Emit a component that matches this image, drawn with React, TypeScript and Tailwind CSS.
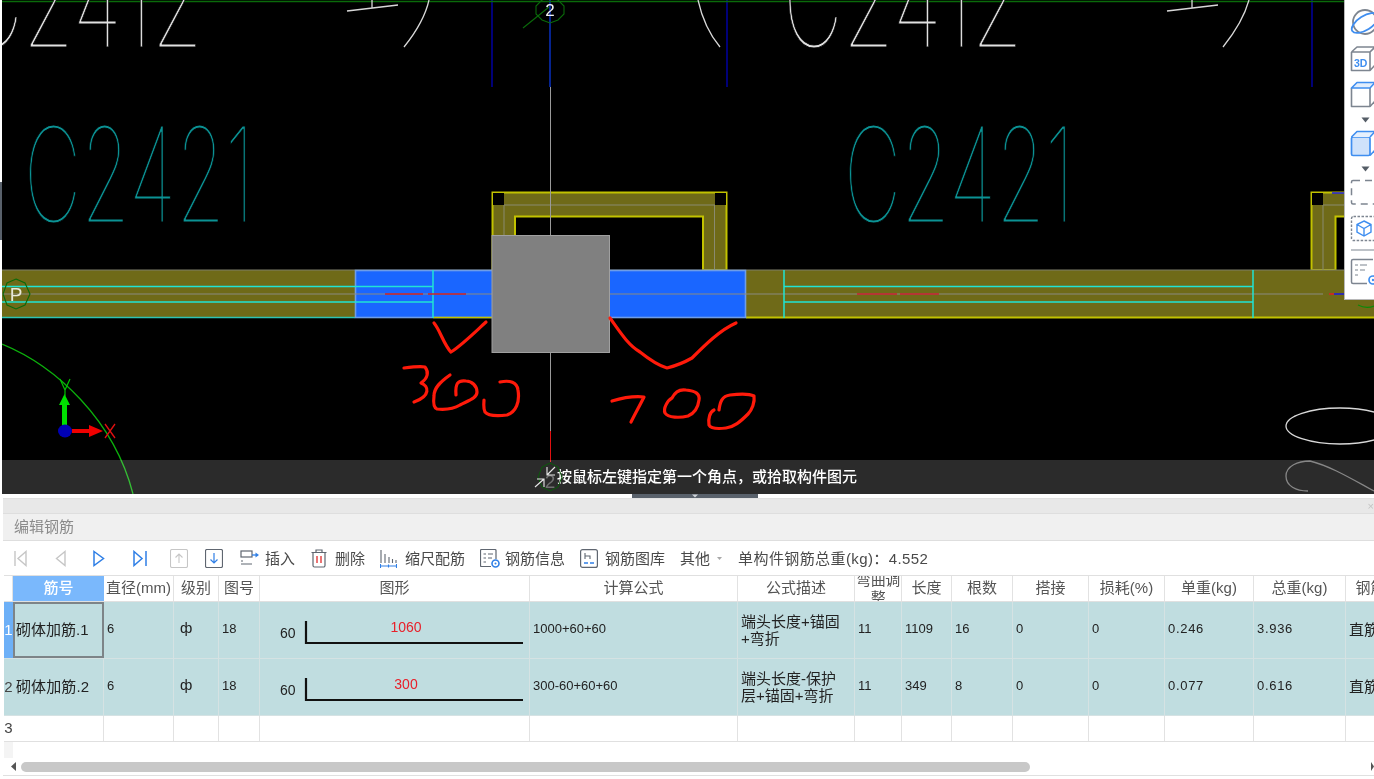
import React from "react";

const gridCols = "grid grid-cols-[9px_91px_70px_45px_41px_270px_208px_117px_47px_50px_61px_76px_76px_89px_92px_80px]";

function CadText({ x, y, w, fill, children }: { x: number; y: number; w: number; fill: string; children: string }) {
  return (
    <text x={x} y={y} textLength={w} lengthAdjust="spacingAndGlyphs" fontFamily="Inter, Roboto, sans-serif" fontWeight={100} fontSize={132} fill={fill} stroke="#000" strokeWidth={0.9}>
      {children}
    </text>
  );
}

function CadCanvas() {
  const red = "#ff1a0a";
  return (
    <svg viewBox="0 0 1372 494" className="absolute inset-0 w-[1372px] h-[494px]">
      <rect width="1372" height="494" fill="#000" />
      <g transform="translate(-2 0)">
        {/* blue grid stubs */}
        {[492, 727, 1312].map((x) => (
          <line key={x} x1={x} y1="0" x2={x} y2="87" stroke="#0000c8" strokeWidth="1.2" />
        ))}
        <line x1="550" y1="0" x2="550" y2="87" stroke="#0a3cf0" strokeWidth="1.2" />
        <line x1="2" y1="1.5" x2="1374" y2="1.5" stroke="#0a6a0a" strokeWidth="1.5" />

        {/* white annotation */}
        <CadText x={-37} y={47} w={240} fill="#e0e0e0">C2412</CadText>
        <CadText x={783} y={47} w={240} fill="#e0e0e0">C2412</CadText>
        <g stroke="#d8d8d8" strokeWidth="1.3" fill="none">
          <path d="M347 11 L398 5 M372 8 V0" />
          <path d="M404 47 C416 32 425 18 429 0" />
          <path d="M1167 11 L1218 5 M1192 8 V0" />
          <path d="M1223 47 C1235 32 1244 18 1249 0" />
          <path d="M720 47 C710 35 702 18 698 0" />
          <ellipse cx="1340" cy="426" rx="54" ry="18" />
        </g>
        <path d="M1308 491 C1296 491 1286 486 1286 476 C1286 466 1298 461 1310 461 C1330 466 1350 478 1374 491" stroke="#6e6e6e" strokeWidth="1.3" fill="none" />

        {/* cyan labels */}
        <CadText x={24} y={222} w={230} fill="#0b9294">C2421</CadText>
        <CadText x={844} y={222} w={230} fill="#0b9294">C2421</CadText>

        {/* U shapes */}
        <path d="M492.5 270 V192.5 H726.5 V270 H703 V216.5 H515 V270 Z" fill="#6f6a18" stroke="#c2c200" strokeWidth="2" />
        <rect x="493" y="193" width="11" height="12" fill="#000" />
        <rect x="715" y="193" width="11" height="12" fill="#000" />
        <path d="M504 205 H715 M504 205 V270 M714.5 205 V294" stroke="#8a8a70" strokeWidth="1" fill="none" />
        <path d="M1311.5 270 V192.5 H1346 V216.5 H1335.5 V270 Z" fill="#6f6a18" stroke="#c2c200" strokeWidth="2" />
        <rect x="1312" y="193" width="11" height="12" fill="#000" />
        <path d="M1323 205 H1346 M1323 205 V294" stroke="#8a8a70" strokeWidth="1" fill="none" />
        <line x1="1332" y1="193" x2="1346" y2="193" stroke="#1a1ae0" strokeWidth="1.5" />

        {/* wall band */}
        <rect x="2" y="270" width="1372" height="48" fill="#6f6a18" />
        <line x1="2" y1="270" x2="1374" y2="270" stroke="#7e7e6a" strokeWidth="1" />
        <line x1="2" y1="317.5" x2="355" y2="317.5" stroke="#2fc4b4" strokeWidth="1.4" />
        <line x1="746" y1="317.5" x2="1374" y2="317.5" stroke="#c2c200" strokeWidth="1.8" />

        {/* blue selected */}
        <rect x="355.5" y="270.5" width="390" height="47" fill="#1a66ff" stroke="#6e9de8" strokeWidth="1.6" />
        <line x1="433" y1="317.5" x2="492" y2="317.5" stroke="#c2c200" strokeWidth="1.4" />

        {/* centre and cyan lines */}
        <line x1="2" y1="294" x2="1323" y2="294" stroke="#8a8a80" strokeWidth="1" />
        <g stroke="#20e4d4" strokeWidth="1.5" fill="none">
          <path d="M2 286.5 H433 M2 302 H433 M433 270 V318" />
          <path d="M784 286.5 H1253 M784 302 H1253 M784 270 V318 M1253 270 V318" />
        </g>
        <g stroke="#c8202c" strokeWidth="1.4">
          <path d="M385 294 H423 M428 294 H466" />
          <path d="M857 294 H897 M900 294 H939" />
        </g>
        <path d="M1329 294 H1334" stroke="#e02020" strokeWidth="1.5" />
        <path d="M1334 294 H1346" stroke="#1a1ae0" strokeWidth="1.5" />

        {/* column */}
        <rect x="492" y="235.5" width="117.5" height="117" fill="#808080" stroke="#a0a0a0" strokeWidth="1" />
        <line x1="550.5" y1="87" x2="550.5" y2="235" stroke="#9a9a9a" strokeWidth="1" />
        <line x1="550.5" y1="353" x2="550.5" y2="431" stroke="#9a9a9a" strokeWidth="1" />
        <line x1="550.5" y1="431" x2="550.5" y2="462" stroke="#e01010" strokeWidth="1" />

        {/* axis circles */}
        <polygon points="550,-3 558,0 564,6 564,14 558,20 550,23 542,20 536,14 536,6 542,0" fill="none" stroke="#0a6a0a" strokeWidth="1.1" />
        <line x1="523" y1="28" x2="549" y2="7" stroke="#0a6a0a" strokeWidth="1.1" />
        <text x="550" y="16" textAnchor="middle" fontFamily="Liberation Sans, sans-serif" fontSize="17" fill="#f0f0f0">2</text>
        <polygon points="16,279 25,283 30,294 25,305 16,309 7,305 3,294 7,283" fill="none" stroke="#0a6a0a" strokeWidth="1.1" />
        <text x="16" y="301" textAnchor="middle" fontFamily="Liberation Sans, sans-serif" fontSize="19" fill="#e8e8d8">P</text>
        <path d="M1358 305 Q1366 309 1374 306" fill="none" stroke="#0a8a0a" strokeWidth="1.2" />

        {/* green arc */}
        <path d="M2 344 C56 366 114 420 133 494" fill="none" stroke="#0cb00c" strokeWidth="1.3" />

        {/* UCS */}
        <path d="M62 425 V405 H59 L64.5 394 L70 405 H67 V425 Z" fill="#00e000" />
        <path d="M72 429 H89 V425 L103 431 L89 437 V433 H72 Z" fill="#f00000" />
        <ellipse cx="65" cy="431" rx="7" ry="6.5" fill="#0000b4" />
        <path d="M60 379 L65 390 L70 379 M65 390 V396" stroke="#00c000" strokeWidth="1.2" fill="none" />
        <path d="M105 424 L115 438 M115 424 L105 438" stroke="#e01010" strokeWidth="1.3" fill="none" />

        {/* handwriting */}
        <g stroke={red} strokeWidth="3.2" fill="none" strokeLinecap="round" strokeLinejoin="round">
          <path d="M434 323 C440 330 444 345 451 352 C462 345 475 332 486 322" />
          <path d="M610 318 C620 332 628 345 640 352 C650 360 660 366 667 368 C675 366 685 362 692 358 C705 345 720 330 736 323" />
          <path d="M404 368 C412 367 420 366 425 367 C429 372 428 378 421 383 C429 386 431 396 414 402" />
          <path d="M450 375 C440 382 434 388 434 396 C433 404 434 408 437 409 C447 410 455 408 460 405 C470 400 477 398 477 392 C477 386 472 381 466 381 C458 380 455 383 456 395" />
          <path d="M500 382 C510 380 517 382 518 390 C520 402 516 412 507 415 C498 416 488 416 485 412 C483 408 484 403 484 400" />
          <path d="M612 401 C622 398 634 396 644 397 C640 405 635 414 631 422" />
          <path d="M672 398 C675 392 680 389 686 390 C696 391 700 394 699 400 C698 408 695 413 688 416 C680 418 668 418 665 413 C663 408 668 400 672 398" />
          <path d="M719 410 C720 402 722 396 730 395 C738 394 748 393 754 396 C755 402 752 410 748 414 C740 422 734 427 726 428 C718 429 711 429 709 425 C708 418 710 412 714 410" />
        </g>
      </g>
    </svg>
  );
}

function SideIcons() {
  const g = "#7d8590";
  const b = "#3f8ef0";
  return (
    <svg viewBox="0 0 30 300" className="w-[30px] h-[300px]">
      <circle cx="20" cy="22" r="12" fill="none" stroke={g} strokeWidth="1.8" />
      <ellipse cx="20" cy="23" rx="15" ry="7" transform="rotate(-32 20 23)" fill="none" stroke={b} strokeWidth="1.8" />
      <path d="M6.5 52 L12 47 H30 M6.5 52 V70.5 H25 V52 H6.5 M25 52 L30 47 M25 70.5 L30 65" fill="none" stroke={g} strokeWidth="1.6" strokeLinejoin="round" />
      <text x="9" y="67" fontFamily="Liberation Sans, sans-serif" fontWeight="700" fontSize="10.5" fill={b}>3D</text>
      <path d="M6.5 88 V106.5 H25 V88" fill="none" stroke={g} strokeWidth="1.6" strokeLinejoin="round" />
      <path d="M6.5 88 L12 82.5 H30 L25 88 Z" fill="#e3eefc" stroke={b} strokeWidth="1.6" strokeLinejoin="round" />
      <path d="M25 106.5 L30 101" stroke={g} strokeWidth="1.6" />
      <path d="M16.5 117.5 H24.5 L20.5 122.5 Z" fill="#555d66" />
      <rect x="6.5" y="137" width="18.5" height="18.5" rx="1.5" fill="#cfe2fb" stroke={b} strokeWidth="1.7" />
      <path d="M6.5 137 L12 131.5 H30 L25 137" fill="#e6f0fd" stroke={b} strokeWidth="1.6" strokeLinejoin="round" />
      <path d="M25 155.5 L30 150" stroke={b} strokeWidth="1.6" />
      <path d="M16.5 166.5 H24.5 L20.5 171.5 Z" fill="#555d66" />
      <rect x="6.5" y="180.5" width="28" height="23.5" rx="1.5" fill="none" stroke={g} strokeWidth="1.5" strokeDasharray="7 5" />
      <rect x="6.5" y="216.5" width="32" height="24" rx="2" fill="none" stroke={g} strokeWidth="1.4" strokeDasharray="2.5 1.5" />
      <path d="M19 221 L26 224.5 V232 L19 236 L12 232 V224.5 Z M12 224.5 L19 228.5 L26 224.5 M19 228.5 V236" fill="none" stroke={b} strokeWidth="1.4" />
      <line x1="6" y1="250" x2="30" y2="250" stroke={g} strokeWidth="1" />
      <path d="M28 259.5 H8 A1.5 1.5 0 0 0 6.5 261 V282 A1.5 1.5 0 0 0 8 283.5 H22" fill="none" stroke={g} strokeWidth="1.5" />
      <path d="M10 265 H13 M15 265 H22 M10 270 H13 M15 270 H20 M10 275 H13" stroke={g} strokeWidth="1.2" />
      <circle cx="28" cy="280" r="4" fill="none" stroke={b} strokeWidth="1.7" />
      <circle cx="28" cy="280" r="1.2" fill={b} />
    </svg>
  );
}

function Toolbar() {
  const t = "text-[15px] leading-none text-[#4a4a4a] whitespace-nowrap";
  const blue = "#2f7fe6";
  const dis = "#c6c6c6";
  const dk = "#5f6670";
  return (
    <div className="h-[34px] flex items-center bg-white">
      <svg width="13" height="17" viewBox="0 0 13 17" className="ml-[11px]" fill="none" stroke={dis} strokeWidth="1.4"><path d="M1 1 V16 M12 1.5 L4 8.5 L12 15.5 Z" /></svg>
      <svg width="11" height="17" viewBox="0 0 11 17" className="ml-[28px]" fill="none" stroke={dis} strokeWidth="1.4"><path d="M10 1.5 L1.5 8.5 L10 15.5 Z" /></svg>
      <svg width="12" height="17" viewBox="0 0 12 17" className="ml-[27px]" fill="none" stroke={blue} strokeWidth="1.5"><path d="M1 1.5 L10.5 8.5 L1 15.5 Z" /></svg>
      <svg width="14" height="17" viewBox="0 0 14 17" className="ml-[28px]" fill="none" stroke={blue} strokeWidth="1.5"><path d="M1 1.5 L9 8.5 L1 15.5 Z M13 1 V16" /></svg>
      <svg width="18" height="19" viewBox="0 0 18 19" className="ml-[23px]" fill="none" stroke={dis} strokeWidth="1.1"><rect x="0.5" y="0.5" width="17" height="18" rx="1.5" /><path d="M9 14 V5 M5.5 8.5 L9 5 L12.5 8.5" /></svg>
      <svg width="18" height="19" viewBox="0 0 18 19" className="ml-[17px]" fill="none"><rect x="0.5" y="0.5" width="17" height="18" rx="1.5" stroke={dk} strokeWidth="1.2" /><path d="M9 4 V14 M5.5 10.5 L9 14 L12.5 10.5" stroke={blue} strokeWidth="1.2" /></svg>
      <svg width="19" height="16" viewBox="0 0 19 16" className="ml-[17px]" fill="none"><rect x="1" y="1" width="11" height="6" stroke={dk} strokeWidth="1.2" /><path d="M1 14 H12 M1 11 H3" stroke={dk} strokeWidth="1.2" /><path d="M12 5 H16" stroke={blue} strokeWidth="1.3" /><path d="M15.5 2.5 L19 5 L15.5 7.5 Z" fill={blue} /></svg>
      <span className={`${t} ml-[6px]`}>插入</span>
      <svg width="16" height="19" viewBox="0 0 16 19" className="ml-[16px]" fill="none"><path d="M0.5 3.5 H15.5 M5 3 V1 H11 V3" stroke={dk} strokeWidth="1.2" /><path d="M2 4 V16.5 A1.5 1.5 0 0 0 3.5 18 H12.5 A1.5 1.5 0 0 0 14 16.5 V4" stroke={dk} strokeWidth="1.2" /><path d="M6 7 V14 M10 7 V14" stroke="#e23b3b" strokeWidth="1.4" /></svg>
      <span className={`${t} ml-[8px]`}>删除</span>
      <svg width="17" height="19" viewBox="0 0 17 19" className="ml-[15px]" fill="none"><path d="M1 1 V14 M5 5 V14 M9 8 V14 M12.5 10 V14 M16 11 V14" stroke={dk} strokeWidth="1.1" /><path d="M0.5 17 H16.5 M0.5 15 V19 M16.5 15 V19 M8.5 15.5 V18.5" stroke={blue} strokeWidth="1.1" /></svg>
      <span className={`${t} ml-[8px]`}>缩尺配筋</span>
      <svg width="20" height="19" viewBox="0 0 20 19" className="ml-[15px]" fill="none"><path d="M16 10 V1.5 A1 1 0 0 0 15 0.5 H1.5 A1 1 0 0 0 0.5 1.5 V16.5 A1 1 0 0 0 1.5 17.5 H11" stroke={dk} strokeWidth="1.2" /><path d="M3.5 5 H6 M8 5 H13 M3.5 9 H6 M8 9 H12 M3.5 13 H6" stroke={dk} strokeWidth="1.1" /><circle cx="15.5" cy="14.5" r="3.5" fill="none" stroke={blue} strokeWidth="1.6" /><circle cx="15.5" cy="14.5" r="1" fill={blue} /></svg>
      <span className={`${t} ml-[5px]`}>钢筋信息</span>
      <svg width="18" height="19" viewBox="0 0 18 19" className="ml-[15px]" fill="none"><rect x="0.6" y="0.6" width="16.8" height="17.8" rx="2" stroke={dk} strokeWidth="1.2" /><path d="M5 4 V10 M5 7 H10 V10" stroke={dk} strokeWidth="1.1" /><path d="M4 14 H8 M10 14 H14" stroke={blue} strokeWidth="1.3" /></svg>
      <span className={`${t} ml-[7px]`}>钢筋图库</span>
      <span className={`${t} ml-[15px]`}>其他</span>
      <svg width="5" height="3" viewBox="0 0 5 3" className="ml-[7px]"><path d="M0 0 H5 L2.5 3 Z" fill="#a8a8a8" /></svg>
      <span className={`${t} ml-[16px] tracking-[0.4px]`}>单构件钢筋总重(kg)：4.552</span>
    </div>
  );
}

const headers = ["", "筋号", "直径(mm)", "级别", "图号", "图形", "计算公式", "公式描述", "弯曲调整", "长度", "根数", "搭接", "损耗(%)", "单重(kg)", "总重(kg)", "钢筋归类"];

function Shape({ len }: { len: string }) {
  return (
    <svg width="270" height="56" viewBox="0 0 270 56" className="block">
      <text x="20" y="36" fontFamily="Liberation Sans, sans-serif" fontSize="14" fill="#222">60</text>
      <path d="M46 19 V41 H263" fill="none" stroke="#111" strokeWidth="2.2" />
      <text x="146" y="30" textAnchor="middle" fontFamily="Liberation Sans, sans-serif" fontSize="14" fill="#e8202a">{len}</text>
    </svg>
  );
}

type Row = { no: string; name: string; len: string; formula: string; desc: React.ReactNode; l: string; n: string; unit: string; total: string };
const rows: Row[] = [
  { no: "1", name: "砌体加筋.1", len: "1060", formula: "1000+60+60", desc: <>端头长度+锚固<br />+弯折</>, l: "1109", n: "16", unit: "0.246", total: "3.936" },
  { no: "2", name: "砌体加筋.2", len: "300", formula: "300-60+60+60", desc: <>端头长度-保护<br />层+锚固+弯折</>, l: "349", n: "8", unit: "0.077", total: "0.616" },
];

function Table() {
  const num = "flex items-center pl-[3px] text-[13px] text-[#222] border-r border-[#d5e2e3] whitespace-nowrap overflow-hidden pb-[3px]";
  return (
    <div className="pl-[4px] bg-white text-[#222]">
      <div className={`${gridCols} h-[27px] border-t border-b border-[#e0e0e0] overflow-hidden`}>
        {headers.map((h, i) => (
          <div
            key={i}
            className={
              i === 1
                ? "flex items-center justify-center bg-[#7ab8fc] text-white text-[15px] font-medium"
                : "flex items-center justify-center text-[15px] text-[#555] border-r border-[#e2e2e2] whitespace-nowrap overflow-hidden"
            }
          >
            {i === 8 ? <span className="w-[46px] text-center whitespace-normal leading-[18px] shrink-0 tracking-[-0.3px]">{h}</span> : h}
          </div>
        ))}
      </div>
      {rows.map((r, i) => (
        <div key={r.no} className={`${gridCols} h-[57px] bg-[#c0dde0] border-b border-[#d5e2e3] overflow-hidden`}>
          <div className={i === 0 ? "flex items-center justify-center bg-[#6db0f7] text-white text-[15px]" : "flex items-center justify-center text-[#444] text-[15px] bg-[#c0dde0]"}>{r.no}</div>
          <div className={i === 0 ? "flex items-center pl-[1px] text-[15px] border-2 border-[#7d8488]" : "flex items-center pl-[3px] text-[15px] tracking-[0.1px] border-r border-[#d5e2e3]"}>{r.name}</div>
          <div className={num}>6</div>
          <div className={`${num} pl-[6px] text-[15px]`}>ф</div>
          <div className={num}>18</div>
          <div className="border-r border-[#d5e2e3] overflow-hidden"><Shape len={r.len} /></div>
          <div className={num}>{r.formula}</div>
          <div className="flex items-center pl-[3px] text-[15px] leading-[17px] border-r border-[#d5e2e3] whitespace-nowrap overflow-hidden">
            <span>{r.desc}</span>
          </div>
          <div className={num}>11</div>
          <div className={num}>{r.l}</div>
          <div className={num}>{r.n}</div>
          <div className={num}>0</div>
          <div className={num}>0</div>
          <div className={`${num} tracking-[0.7px]`}>{r.unit}</div>
          <div className={`${num} tracking-[0.7px]`}>{r.total}</div>
          <div className="flex items-center pl-[3px] text-[15px] overflow-hidden whitespace-nowrap">直筋</div>
        </div>
      ))}
      <div className={`${gridCols} h-[26px] border-b border-[#e0e0e0]`}>
        {headers.map((_, i) => (
          <div key={i} className={i === 0 ? "flex items-center justify-center text-[15px] text-[#444]" : "border-r border-[#e2e2e2]"}>
            {i === 0 ? "3" : null}
          </div>
        ))}
      </div>
      <div className="h-[16px] w-[9px] bg-[#f4f4f4]" />
    </div>
  );
}

export default function App() {
  return (
    <div className="w-[1374px] h-[779px] overflow-hidden bg-white blur-[0.4px] font-['Liberation_Sans','Noto_Sans_CJK_SC',sans-serif]">
      <div className="flex h-[494px]">
        <div className="w-[2px] flex flex-col bg-white">
          <div className="h-[182px]" />
          <div className="h-[58px] bg-[#59616b]" />
        </div>
        <div className="relative flex-1 overflow-hidden">
          <CadCanvas />
          <div className="absolute left-0 right-0 bottom-0 h-[34px] bg-white/[0.17] flex items-center text-white text-[15px] font-medium pl-[555px] whitespace-nowrap">
            <svg width="34" height="34" viewBox="0 0 34 34" className="absolute left-[531px] top-0" fill="none">
              <polygon points="17,3 25,7 29,17 25,27 17,31 9,27 5,17 9,7" stroke="#0a5a0a" strokeWidth="1" />
              <text x="17" y="28" textAnchor="middle" fontFamily="Liberation Sans, sans-serif" fontSize="19" fill="#707070">2</text>
              <path d="M14 7 V15 H22 M14 15 L22 7 M2 27 L11 19 M4 19 H11 V27" stroke="#e8e8e8" strokeWidth="1.1" />
            </svg>
            <span>按鼠标左键指定第一个角点，或拾取构件图元</span>
          </div>
          <div className="absolute right-0 top-0 w-[30px] h-[300px] bg-white border-l border-b border-[#b8b8b8] overflow-hidden">
            <SideIcons />
          </div>
        </div>
      </div>

      <div className="relative h-[19px] ml-[3px] pt-[4px]">
        <div className="h-[15px] bg-[#e8e8e8] border-t border-[#e0e0e0] flex justify-end items-center text-[11px] leading-none text-[#c4c4c4]">×</div>
        <div className="absolute left-[629px] top-0 w-[126px] h-[4px] bg-[#59616b] flex justify-center">
          <svg width="8" height="4" viewBox="0 0 8 4"><path d="M1 0.5 H7 L4 3.5 Z" fill="#cfd3d8" /></svg>
        </div>
      </div>
      <div className="h-[28px] bg-[#f0f0f0] border-t border-b border-[#dedede] ml-[3px] flex items-center pl-[11px] text-[15px] text-[#8a8a8a]">编辑钢筋</div>
      <div className="ml-[3px]"><Toolbar /></div>
      <Table />
      <div className="h-[18px] ml-[3px] flex items-center border-b border-[#e0e0e0]">
        <svg width="5" height="9" viewBox="0 0 5 9" className="ml-[8px]"><path d="M5 0 V9 L0 4.5 Z" fill="#555" /></svg>
        <div className="ml-[5px] w-[1009px] h-[10px] rounded-full bg-[#c8c8c8]" />
        <svg width="3" height="9" viewBox="0 0 3 9" className="ml-auto"><path d="M0 0 V9 L3 4.5 Z" fill="#555" /></svg>
      </div>
    </div>
  );
}
